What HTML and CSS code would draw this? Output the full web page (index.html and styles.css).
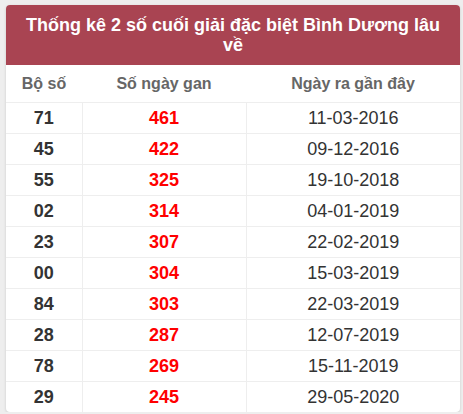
FILE: index.html
```html
<!DOCTYPE html>
<html>
<head>
<meta charset="utf-8">
<link rel="stylesheet" href="styles.css">
</head>
<body>
<div class="card">
  <div class="title">Thống kê 2 số cuối giải đặc biệt Bình Dương lâu về</div>
  <table class="tbl">
    <thead>
      <tr><th class="c1">Bộ số</th><th class="c2">Số ngày gan</th><th class="c3">Ngày ra gần đây</th></tr>
    </thead>
    <tbody>
      <tr><td class="num">71</td><td class="gan">461</td><td class="date">11-03-2016</td></tr>
      <tr><td class="num">45</td><td class="gan">422</td><td class="date">09-12-2016</td></tr>
      <tr><td class="num">55</td><td class="gan">325</td><td class="date">19-10-2018</td></tr>
      <tr><td class="num">02</td><td class="gan">314</td><td class="date">04-01-2019</td></tr>
      <tr><td class="num">23</td><td class="gan">307</td><td class="date">22-02-2019</td></tr>
      <tr><td class="num">00</td><td class="gan">304</td><td class="date">15-03-2019</td></tr>
      <tr><td class="num">84</td><td class="gan">303</td><td class="date">22-03-2019</td></tr>
      <tr><td class="num">28</td><td class="gan">287</td><td class="date">12-07-2019</td></tr>
      <tr><td class="num">78</td><td class="gan">269</td><td class="date">15-11-2019</td></tr>
      <tr><td class="num">29</td><td class="gan">245</td><td class="date">29-05-2020</td></tr>
    </tbody>
  </table>
</div>
</body>
</html>
```
FILE: styles.css
```css
html, body {
  margin: 0;
  padding: 0;
  background: #eeeeee;
}
body {
  padding: 5px 3px 0 6px;
  font-family: "Liberation Sans", Arial, sans-serif;
}
.card {
  width: 454px;
  background: #ffffff;
  border-radius: 4px;
  box-shadow: 0 1px 3px rgba(0,0,0,0.15);
  overflow: hidden;
}
.title {
  background: #a94452;
  color: #ffffff;
  font-weight: bold;
  font-size: 18px;
  line-height: 20px;
  text-align: center;
  padding: 10px 16px 10px;
}
.tbl {
  width: 100%;
  border-collapse: collapse;
  table-layout: fixed;
}
.c1 { width: 76px; }
.c2 { width: 164px; }
.tbl th {
  height: 37px;
  padding: 0;
  font-size: 16px;
  font-weight: bold;
  color: #666666;
  text-align: center;
  border-bottom: 1px solid #eeeeee;
}
.tbl td {
  height: 30px;
  padding: 0;
  font-size: 18px;
  text-align: center;
  border-bottom: 1px solid #eeeeee;
  border-right: 1px solid #eeeeee;
  color: #333333;
}
.tbl tr:last-child td { border-bottom: none; }
.tbl td:last-child { border-right: none; }
.num { font-weight: bold; }
.gan { font-weight: bold; color: #ff0000 !important; }
.date { font-weight: normal; }
```
